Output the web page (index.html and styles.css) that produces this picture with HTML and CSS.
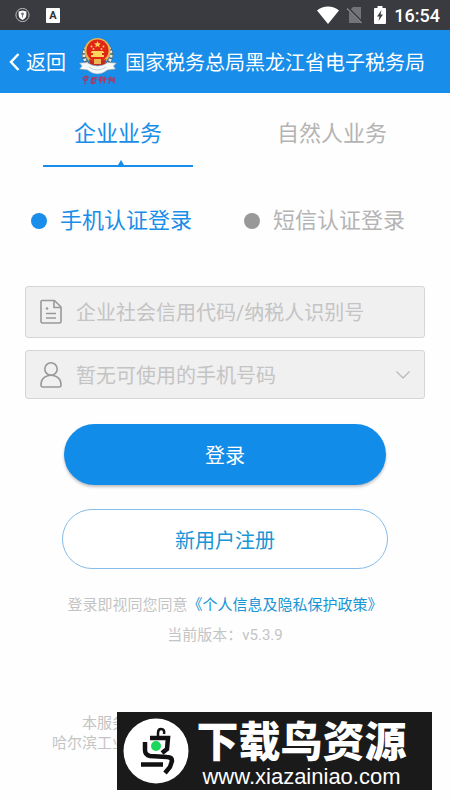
FILE: index.html
```
<!DOCTYPE html>
<html lang="zh-CN">
<head>
<meta charset="UTF-8" />
<meta name="viewport" content="width=device-width, initial-scale=1" />
<title>国家税务总局黑龙江省电子税务局</title>
<link rel="stylesheet" href="styles.css">
</head>
<body>
<div class="statusbar">
  <div class="status-group">
    <svg width="15" height="16" viewBox="0 0 15 16" aria-hidden="true">
      <circle cx="7.5" cy="8" r="6.6" fill="none" stroke="#b9babd" stroke-width="1"/>
      <path d="M7.5 3.4 11.4 4.6V8c0 2.300-1.600 3.900-3.900 5C5.200 11.900 3.600 10.300 3.600 8V4.600z" fill="#fff"/>
      <circle cx="7.500" cy="7" r="1.400" fill="#77787c"/>
      <path d="M7.500 8v2.500" stroke="#77787c"/>
    </svg>
    <span class="app-badge">A</span>
  </div>
  <div class="status-group status-right">
    <svg class="wifi" width="22" height="18" viewBox="0 0 22 18" aria-hidden="true">
      <path d="M0 4.500C6-.9 16-.9 22 4.500L11 18z" fill="#fff"/>
    </svg>
    <svg class="sim" width="16" height="18" viewBox="0 0 16 18" aria-hidden="true">
      <path d="M6 1h8v16H2V5z" fill="#737479"/>
      <path d="M0 1.500 15.500 17" stroke="#3a3b40" stroke-width="3"/>
      <path d="M0 2.500 14.500 17" stroke="#8c8d91" stroke-width="1.200"/>
    </svg>
    <svg class="battery" width="12" height="18" viewBox="0 0 12 18" aria-hidden="true">
      <path d="M3.500 0h5v2H11q1 0 1 1v14q0 1-1 1H1q-1 0-1-1V3q0-1 1-1h2.500z" fill="#fff"/>
      <path d="M7.500 4 3 10.500h2.500L4.500 15 9 8.500H6.500z" fill="#3a3b40"/>
    </svg>
    <span class="clock">16:54</span>
  </div>
</div>

<header>
  <a class="back" href="#">
    <svg width="11" height="18" viewBox="0 0 11 18" aria-hidden="true">
      <path d="M9.500 1 2 9l7.500 8" fill="none" stroke="#fff" stroke-width="2.500"/>
    </svg>
    返回
  </a>
  <svg class="emblem" width="38" height="50" viewBox="0 0 38 50" aria-hidden="true">
    <circle cx="18.500" cy="18" r="13.500" fill="none" stroke="#47606f" stroke-width="4"/>
    <circle cx="18.500" cy="18" r="13.500" fill="none" stroke="#dfe8ea" stroke-width="3" stroke-dasharray="2.500 1.500"/>
    <circle cx="18.500" cy="14" r="13" fill="#e8b24e"/>
    <circle cx="18.500" cy="13.500" r="11" fill="#e02416"/>
    <path d="m18.500 4 1 2.200 2.400.2-1.800 1.500.6 2.300-2.200-1.200-2.200 1.200.6-2.300-1.800-1.500 2.400-.2z" fill="#ffd45a"/>
    <g fill="#ffd45a">
      <circle cx="12.500" cy="9.500" r="1"/><circle cx="24.500" cy="9.500" r="1"/>
      <circle cx="14.500" cy="12" r=".9"/><circle cx="22.500" cy="12" r=".9"/>
      <path d="M13 14h11l1.500 2h-14zM14 16h9v2h2v2H12v-2h2z"/>
    </g>
    <path d="M10 22q8.500 4 17 0l-1 5q-7.500 3-15 0z" fill="#c9251d"/>
    <path d="M15 22h7v5h-7z" fill="#eab552"/>
    <path d="M.5 26 8 25.500q10.500 7 21 0l8.500.5-3 3 2 3-8 1q-10 8-20 0l-8-1 2.500-3z" fill="#f5f9fa" stroke="#8d9da5" stroke-width=".6"/>
    <path d="M10 30q8.500 6 17 0" fill="none" stroke="#b9c5ca" stroke-width=".8"/>
    <g fill="none" stroke="#b8345a" stroke-width="1.300" stroke-linecap="round">
      <path d="M4 41q3-2 5-1l-1 3H5l-1-2M7 39l-1 8"/>
      <path d="m13 41-1 5m1-5 4-.5-1 5.500-3 .5m0-4h2m-1-1v4"/>
      <path d="m20 41 3-1m-3 3h3m-1-3-1 6m3-5 2 1m-2 1 3-1m-1-2-1 6"/>
      <path d="m29 42 3-1m-1-1-1 6m2-3 3-2v5m-4-3 4 1"/>
    </g>
  </svg>
  <h1>国家税务总局黑龙江省电子税务局</h1>
</header>

<main>
  <nav class="tabs">
    <button type="button" class="tab active">企业业务</button>
    <button type="button" class="tab">自然人业务</button>
  </nav>

  <form>
    <div class="modes">
      <label class="mode"><input type="radio" name="mode" checked><span>手机认证登录</span></label>
      <label class="mode"><input type="radio" name="mode"><span>短信认证登录</span></label>
    </div>

    <div class="field">
      <label for="taxId" aria-label="企业社会信用代码">
        <svg width="22" height="26" viewBox="0 0 22 26" aria-hidden="true">
          <g fill="none" stroke="#999" stroke-width="1.600" stroke-linejoin="round">
            <path d="M2 1.500h12.500L21 8v14.500q0 1.500-1.500 1.500h-17Q1 24 1 22.500v-20Q1 1.500 2 1.500z"/>
            <path d="M14 2v6.500h6.500M6 14.500h10M6 19h10"/>
          </g>
          <circle cx="7" cy="9.500" r="1.300" fill="#999"/>
        </svg>
      </label>
      <input type="text" id="taxId" placeholder="企业社会信用代码/纳税人识别号">
    </div>

    <div class="field field-phone">
      <label for="phone" aria-label="手机号码">
        <svg width="22" height="26" viewBox="0 0 22 26" aria-hidden="true">
          <g fill="none" stroke="#999" stroke-width="1.600" stroke-linejoin="round">
            <circle cx="11" cy="7" r="6.200"/>
            <path d="M7 14Q1 16 1 23q0 2 2 2h16q2 0 2-2 0-7-6-9-4-1.500-8 0z"/>
          </g>
        </svg>
      </label>
      <select id="phone">
        <option>暂无可使用的手机号码</option>
      </select>
      <svg class="chevron" width="14" height="8" viewBox="0 0 14 8" aria-hidden="true">
        <path d="m.5.500 6.500 6.500 6.500-6.500" fill="none" stroke="#bbb" stroke-width="1.300"/>
      </svg>
    </div>

    <button type="submit" class="btn login">登录</button>
    <button type="button" class="btn register">新用户注册</button>
  </form>

  <p class="note">登录即视同您同意<a href="#">《个人信息及隐私保护政策》</a></p>
  <p class="note">当前版本：v5.3.9</p>
</main>

<footer>
  <p class="service">本服务</p>
  <p class="company">哈尔滨工业</p>
  <div class="banner">
    <svg width="66" height="66" viewBox="0 0 66 66" aria-hidden="true">
      <circle cx="33" cy="33" r="32.500" fill="#fff"/>
      <g fill="none" stroke="#111" stroke-width="4.500">
        <path d="M27 20h18l-1 11-5 4"/>
        <path d="M22 24v8q0 5 5 6l17 1q5 0 5 4l-2 6-5 6"/>
        <path d="M18 46.500h22"/>
        <path d="M35 19v-4q0-4 3-4 4 0 3 5" stroke-width="2.500"/>
      </g>
      <circle cx="33" cy="28" r="5" fill="#1bd75c"/>
    </svg>
    <div class="banner-text">
      <strong>下载鸟资源</strong>
      <span>www.xiazainiao.com</span>
    </div>
  </div>
</footer>
</body>
</html>
```
FILE: styles.css
```
* {
  box-sizing: border-box;
}
body {
  margin: 0;
  background: #fefefe;
  color: #c4c4c4;
  font-family: Roboto, "Noto Sans CJK SC", sans-serif;
  font-size: 20px;
}
button, input, select {
  font-family: inherit;
  font-size: inherit;
}

/* 状态栏 */
.statusbar {
  height: 30px;
  padding: 0 10px 0 15px;
  display: flex;
  align-items: center;
  justify-content: space-between;
  background: #3a3b40;
}
.status-group {
  display: flex;
  align-items: center;
  gap: 16px;
}
.status-right {
  gap: 8px;
}
.app-badge {
  width: 14px;
  height: 15px;
  border-radius: 1px;
  background: #fff;
  color: #333;
  font-size: 11px;
  font-weight: 700;
  line-height: 15px;
  text-align: center;
}
.battery {
  margin-left: 3px;
}
.clock {
  color: #fff;
  font-size: 18px;
  font-weight: 500;
}

header {
  height: 63px;
  padding: 0 9px;
  display: flex;
  align-items: center;
  background: #188de9;
  color: #fff;
}
.back {
  display: flex;
  align-items: center;
  gap: 6px;
  color: #fff;
  text-decoration: none;
}
.emblem {
  margin: 0 8px 0 13px;
  flex-shrink: 0;
}
header h1 {
  margin: 0;
  font-size: 20px;
  font-weight: 400;
  white-space: nowrap;
}

/* 业务切换 */
.tabs {
  padding: 0 43px;
  display: flex;
  justify-content: space-between;
}
.tab {
  position: relative;
  width: 150px;
  padding: 26px 0 16px;
  border: none;
  border-bottom: 2px solid transparent;
  background: none;
  color: #b4b4b4;
  font-size: 22px;
  line-height: 30px;
  cursor: pointer;
}
.tab.active {
  border-color: #188de9;
  color: #188de9;
}
.tab.active::after {
  content: "";
  position: absolute;
  bottom: 0;
  left: 50%;
  border: 3px solid transparent;
  border-top: none;
  border-bottom: 5px solid #188de9;
}

form {
  padding: 39px 25px 0;
}
.modes {
  margin-bottom: 50px;
  padding: 0 20px 0 6px;
  display: flex;
  justify-content: space-between;
}
.mode {
  display: flex;
  align-items: center;
  gap: 13px;
  color: #b4b4b4;
  font-size: 22px;
  line-height: 30px;
}
.mode input {
  appearance: none;
  width: 16px;
  height: 16px;
  margin: 0;
  border-radius: 50%;
  background: #999;
}
.mode input:checked {
  background: #188de9;
}
.mode input:checked + span {
  color: #188de9;
}

.field {
  height: 52px;
  padding: 0 14px;
  display: flex;
  align-items: center;
  gap: 14px;
  border: 1px solid #d6d6d6;
  border-radius: 3px;
  background: #f0f0f0;
}
.field-phone {
  height: 49px;
  margin-top: 12px;
}
.field label {
  display: flex;
}
.field input, .field select {
  appearance: none;
  flex: 1;
  min-width: 0;
  padding: 2px 0 0;
  border: none;
  outline: none;
  background: none;
  color: #c4c4c4;
}
.field input::placeholder {
  color: #c4c4c4;
}

.btn {
  display: block;
  border-radius: 31px;
  cursor: pointer;
}
.login {
  width: calc(100% - 78px);
  height: 61px;
  margin: 25px auto 0;
  border: none;
  background: #128ce9;
  color: #fff;
  box-shadow: 0 2px 3px rgba(0,0,0,0.25);
}
.register {
  width: calc(100% - 74px);
  height: 60px;
  margin: 24px auto 21px;
  border: 1px solid #85bdec;
  background: #fff;
  color: #1795d4;
}

.note {
  margin: 0;
  font-size: 15px;
  line-height: 30px;
  text-align: center;
}
.note a {
  color: #1795d4;
  text-decoration: none;
}

footer {
  position: relative;
  min-height: 78px;
  margin: 62px 0 10px;
  font-size: 15px;
  line-height: 20px;
}
footer p {
  margin: 0;
}
.service {
  padding: 1px 0 0 82px;
}
.company {
  padding-left: 52px;
}

/* 底部横幅，盖在页脚文字上 */
.banner {
  position: absolute;
  top: 0;
  left: 26%;
  right: 4%;
  height: 78px;
  padding: 0 18px 0 6px;
  display: flex;
  align-items: center;
  background: #1a1a1a;
  color: #fff;
}
.banner svg {
  flex-shrink: 0;
}
.banner-text {
  flex: 1;
  padding-top: 8px;
  display: flex;
  flex-direction: column;
  align-items: center;
}
.banner strong {
  font-size: 42px;
  font-weight: 900;
  line-height: 44px;
  white-space: nowrap;
}
.banner span {
  font-family: "Liberation Sans", Arial, sans-serif;
  font-size: 22px;
  line-height: 24px;
}
```
